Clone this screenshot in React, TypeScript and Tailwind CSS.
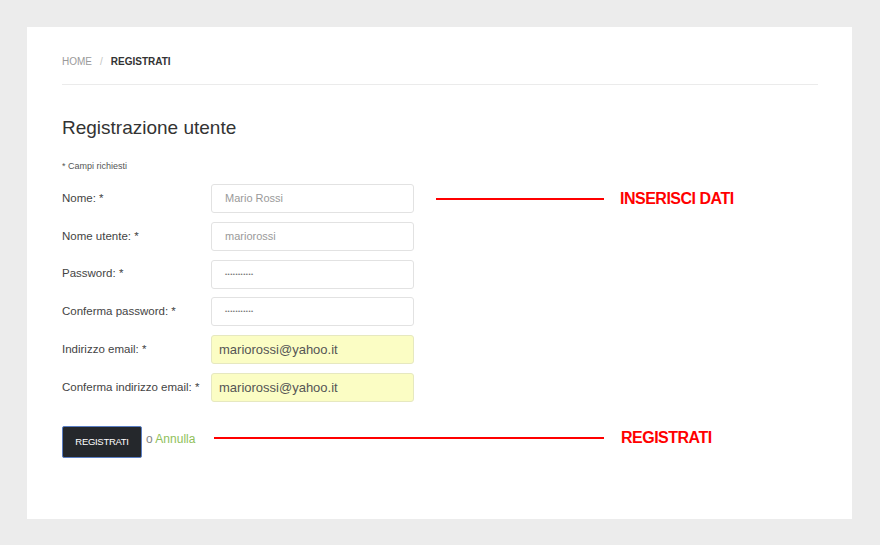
import React from "react";

const font = { fontFamily: '"Liberation Sans", Arial, sans-serif' };

type Row = { label: string; value: string; kind: "plain" | "pw" | "email" };

const rows: Row[] = [
  { label: "Nome:", value: "Mario Rossi", kind: "plain" },
  { label: "Nome utente:", value: "mariorossi", kind: "plain" },
  { label: "Password:", value: "•••••••••••", kind: "pw" },
  { label: "Conferma password:", value: "•••••••••••", kind: "pw" },
  { label: "Indirizzo email:", value: "mariorossi@yahoo.it", kind: "email" },
  { label: "Conferma indirizzo email:", value: "mariorossi@yahoo.it", kind: "email" },
];

function Field({ row }: { row: Row }) {
  if (row.kind === "email") {
    return (
      <div className="w-[203px] h-[29px] rounded-[3px] border border-[#e6e8c0] bg-[#fbfdc4] flex items-center pl-[7px] text-[13px] text-[#555]">
        {row.value}
      </div>
    );
  }
  if (row.kind === "pw") {
    return (
      <div className="w-[203px] h-[29px] rounded-[3px] border border-[#e2e2e2] bg-white flex items-center pl-[13px] text-[6px] tracking-[0.5px] text-[#777]">
        {row.value}
      </div>
    );
  }
  return (
    <div className="w-[203px] h-[29px] rounded-[3px] border border-[#e2e2e2] bg-white flex items-center pl-[13px] text-[11px] text-[#9a9a9a]">
      {row.value}
    </div>
  );
}

export default function App() {
  return (
    <div className="min-h-screen w-full bg-[#ececec] pt-[27px] pl-[27px]" style={font}>
      <div className="w-[825px] h-[492px] bg-white pl-[35px] pr-[34px] pt-[28px]">
        <div className="border-b border-[#ebebeb] pb-[16px] flex items-center text-[10px] leading-[13px]">
          <span className="text-[#9a9a9a]">HOME</span>
          <span className="text-[#c4c4c4] mx-[8px]">/</span>
          <span className="text-[#333] font-bold">REGISTRATI</span>
        </div>
        <h1 className="mt-[31px] text-[19px] leading-[24px] text-[#333]">Registrazione utente</h1>
        <div className="mt-[20px] text-[9px] leading-[12px] text-[#555]">* Campi richiesti</div>
        <div className="mt-[12px] flex flex-col gap-[8.8px]">
          {rows.map((r, i) => (
            <div key={i} className="flex items-center h-[29px]">
              <div className="w-[149px] text-[11.5px] text-[#444]">
                {r.label} *
              </div>
              <Field row={r} />
              {i === 0 && (
                <div className="flex items-center ml-[22px]">
                  <div className="w-[168px] h-[2px] bg-[#ff0000]" />
                  <span className="ml-[16px] text-[16px] font-bold text-[#ff0000] tracking-[-0.5px]">
                    INSERISCI DATI
                  </span>
                </div>
              )}
            </div>
          ))}
        </div>
        <div className="mt-[24px] flex items-start">
          <div className="w-[152px] flex items-start">
            <div className="w-[80px] h-[32px] bg-[#25282c] border border-[#5b7fc4] rounded-[2px] flex items-center justify-center text-[9.5px] text-white tracking-[-0.3px]">
              REGISTRATI
            </div>
            <span className="ml-[4px] mt-[4px] text-[12px] text-[#888]">
              o <span className="text-[#8fbf5a]">Annulla</span>
            </span>
          </div>
          <div className="flex items-center mt-[4px] h-[16px]">
            <div className="w-[390px] h-[2px] bg-[#ff0000]" />
            <span className="ml-[17px] text-[16px] font-bold text-[#ff0000] tracking-[-0.5px]">
              REGISTRATI
            </span>
          </div>
        </div>
      </div>
    </div>
  );
}
